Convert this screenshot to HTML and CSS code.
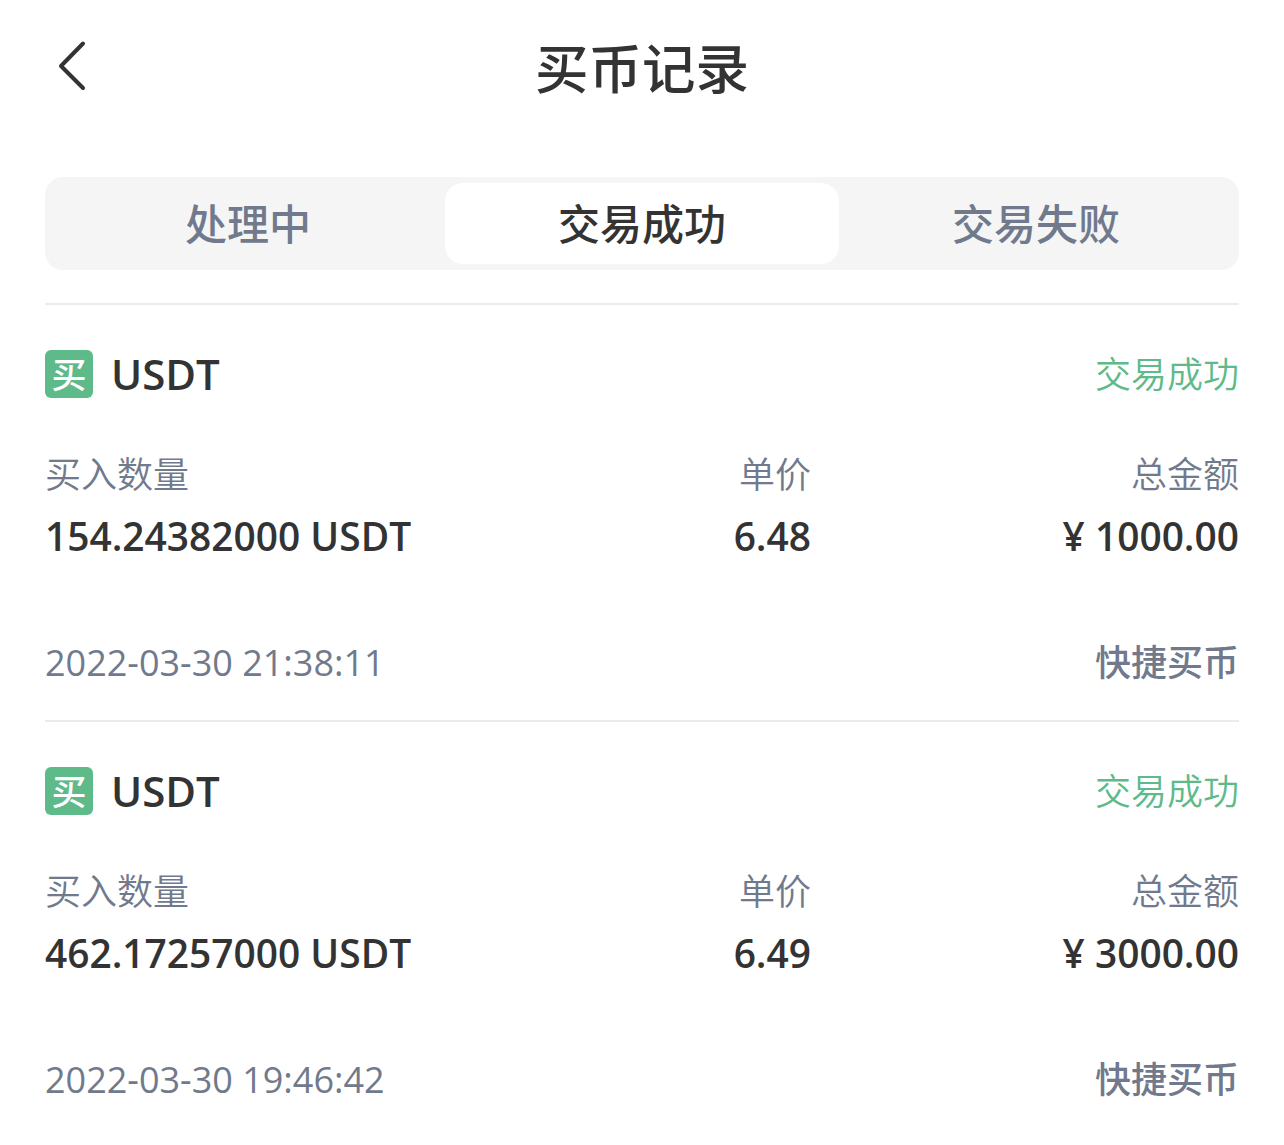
FILE: index.html
```html
<!DOCTYPE html>
<html lang="zh-CN">

  <head>
    <meta charset="UTF-8">
    <title>买币记录</title>
    <meta name="viewport" content="width=device-width, initial-scale=1">
    <link rel="stylesheet" href="styles.css">
  </head>

  <body>
    <header class="header">
      <button class="back" type="button" aria-label="返回">
        <svg width="32" height="56" viewBox="0 0 32 56" aria-hidden="true">
          <path d="M27 5.5 L5 28 L27 50" />
        </svg>
      </button>
      <h1 class="title">买币记录</h1>
    </header>
    <nav class="tabs">
      <button class="tab" type="button">处理中</button>
      <button class="tab active" type="button">交易成功</button>
      <button class="tab" type="button">交易失败</button>
    </nav>
    <main class="orders">
      <article class="order">
        <div class="order-head">
          <span class="badge">买</span>
          <h2 class="coin">USDT</h2>
          <span class="status">交易成功</span>
        </div>
        <dl class="details">
          <div class="detail">
            <dt>买入数量</dt>
            <dd>154.24382000 USDT</dd>
          </div>
          <div class="detail">
            <dt>单价</dt>
            <dd>6.48</dd>
          </div>
          <div class="detail">
            <dt>总金额</dt>
            <dd>¥ 1000.00</dd>
          </div>
        </dl>
        <div class="order-foot">
          <time class="time">2022-03-30 21:38:11</time>
          <span class="channel">快捷买币</span>
        </div>
      </article>
      <article class="order">
        <div class="order-head">
          <span class="badge">买</span>
          <h2 class="coin">USDT</h2>
          <span class="status">交易成功</span>
        </div>
        <dl class="details">
          <div class="detail">
            <dt>买入数量</dt>
            <dd>462.17257000 USDT</dd>
          </div>
          <div class="detail">
            <dt>单价</dt>
            <dd>6.49</dd>
          </div>
          <div class="detail">
            <dt>总金额</dt>
            <dd>¥ 3000.00</dd>
          </div>
        </dl>
        <div class="order-foot">
          <time class="time">2022-03-30 19:46:42</time>
          <span class="channel">快捷买币</span>
        </div>
      </article>
    </main>
  </body>
</html>
```

FILE: styles.css
```css
* {
  box-sizing: border-box;
}

body {
  margin: 0;
  padding: 0 45px;
  background: #fff;
  color: #333;
  font-family: "Open Sans", "Noto Sans CJK SC", sans-serif;
}

h1, h2, dl, dd {
  margin: 0;
}

button {
  padding: 0;
  border: 0;
  background: none;
  font: inherit;
}

.header {
  display: grid;
  grid-template-columns: 100px 1fr 100px;
  align-items: center;
  height: 177px;
  padding-bottom: 45px;
}

.back {
  display: flex;
  padding-left: 11px;
}

.back path {
  fill: none;
  stroke: #333;
  stroke-width: 4;
  stroke-linecap: round;
  stroke-linejoin: round;
}

.title {
  padding-top: 5px;
  text-align: center;
  font-size: 53.5px;
  font-weight: 500;
  line-height: 80px;
}

.tabs {
  display: grid;
  grid-template-columns: repeat(3, 394px);
  justify-content: space-between;
  height: 93px;
  padding: 6px;
  border-radius: 18px;
  background: #f5f5f5;
}

.tab {
  padding-top: 1px;
  border-radius: 18px;
  color: #717a8c;
  font-size: 42px;
  font-weight: 500;
  line-height: 80px;
}

.tab.active {
  background: #fff;
  color: #333;
}

.orders {
  margin-top: 33px;
}

.order {
  height: 417px;
  padding-top: 45px;
  border-top: 2px solid #ebebeb;
}

.order-head {
  display: flex;
  align-items: center;
  height: 48px;
}

.badge {
  width: 48px;
  height: 48px;
  border-radius: 6px;
  background: #5eba89;
  color: #fff;
  font-size: 35px;
  font-weight: 500;
  line-height: 50px;
  text-align: center;
}

.coin {
  margin-left: 18px;
  font-size: 42px;
  font-weight: 600;
  line-height: 48px;
}

.status {
  margin-left: auto;
  padding-top: 2px;
  color: #5eba89;
  font-size: 36px;
  font-weight: 350;
  line-height: 48px;
}

.details {
  display: grid;
  grid-template-columns: 400px 366px 1fr;
  margin-top: 47px;
}

.detail {
  text-align: right;
}

.detail:first-child {
  text-align: left;
}

.detail dt {
  color: #717a8c;
  font-size: 36px;
  font-weight: 350;
  line-height: 60px;
}

.detail dd {
  font-size: 38.9px;
  font-weight: 600;
  line-height: 62px;
}

.order-foot {
  display: flex;
  justify-content: space-between;
  margin-top: 66px;
  color: #717a8c;
  font-size: 36px;
  line-height: 60px;
}

.channel {
  font-weight: 500;
}
```
